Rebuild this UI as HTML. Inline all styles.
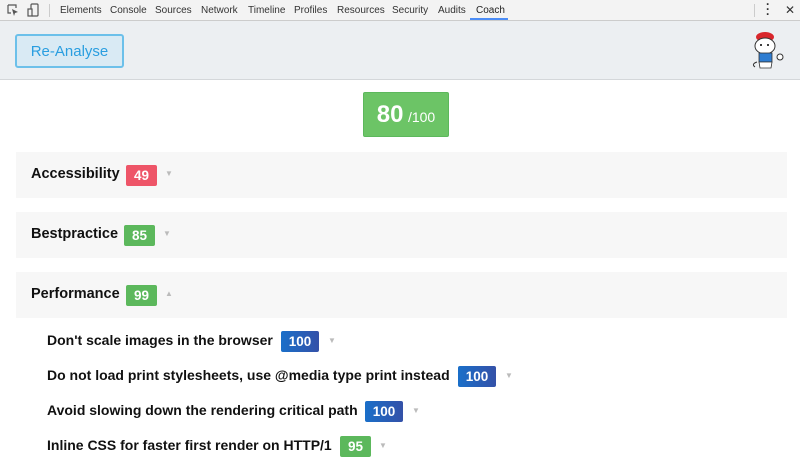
<!DOCTYPE html>
<html><head><style>
*{margin:0;padding:0;box-sizing:border-box}
body{width:800px;height:463px;overflow:hidden;background:#fff;font-family:"Liberation Sans",sans-serif;position:relative}
.tb{position:absolute;left:0;top:0;width:800px;height:21px;background:#f3f3f3;border-bottom:1px solid #ccc}
.tab{position:absolute;top:5px;font-size:10px;color:#333}
.hd{position:absolute;left:0;top:21px;width:800px;height:59px;background:#eceff2;border-bottom:1px solid #d4d7da}
.btn{position:absolute;left:15px;top:13px;width:109px;height:34px;border:2px solid #6cc0ea;border-radius:3px;background:#d9eaf4;color:#2a9ee0;font-size:15px;text-align:center;line-height:32px}
.score{position:absolute;left:363px;top:92px;width:86px;height:45px;background:#6cc466;border:1px solid #5cb85c;border-radius:2px;color:#fff;text-align:center;line-height:44px}
.sec{position:absolute;left:16px;width:771px;height:46px;background:#f7f7f7}
.sec b{position:absolute;left:15px;top:14px;font-size:14.5px;color:#111}
.bdg{position:absolute;height:21px;color:#fff;font-weight:bold;font-size:13.5px;text-align:center;line-height:21px;border-radius:2px}
.g{background:#5cb85c}.r{background:#ee5568}.bl{background:linear-gradient(90deg,#1a6fc9,#3451a8)}
.ar{position:absolute;font-size:8px;color:#bbb}
.it{position:absolute;left:47px;font-weight:bold;font-size:14px;color:#111}
</style></head><body>
<div class="tb">
<svg style="position:absolute;left:7px;top:4px" width="12" height="12" viewBox="0 0 12 12"><path d="M1 1h8v3M1 1v8h3" fill="none" stroke="#555" stroke-width="1.2"/><path d="M5 5l6 3-3 1-1 3z" fill="#555"/></svg>
<svg style="position:absolute;left:27px;top:3px" width="12" height="14" viewBox="0 0 12 14"><rect x="4" y="1" width="7" height="12" rx="1" fill="none" stroke="#555" stroke-width="1.2"/><rect x="1" y="6" width="4" height="7" fill="#f3f3f3" stroke="#555" stroke-width="1.2"/></svg>
<div style="position:absolute;left:49px;top:4px;width:1px;height:13px;background:#ccc"></div>
<span class="tab" style="left:60px">Elements</span>
<span class="tab" style="left:110px">Console</span>
<span class="tab" style="left:155px">Sources</span>
<span class="tab" style="left:201px">Network</span>
<span class="tab" style="left:248px">Timeline</span>
<span class="tab" style="left:294px">Profiles</span>
<span class="tab" style="left:337px">Resources</span>
<span class="tab" style="left:392px">Security</span>
<span class="tab" style="left:438px">Audits</span>
<span class="tab" style="left:476px;color:#222">Coach</span>
<div style="position:absolute;left:470px;top:18px;width:38px;height:2px;background:#4c8df6"></div>
<div style="position:absolute;left:754px;top:4px;width:1px;height:13px;background:#ccc"></div>
<span style="position:absolute;left:766px;top:2px;font-size:12px;font-weight:bold;color:#333;line-height:5px;width:3px">·<br>·<br>·</span>
<span style="position:absolute;left:785px;top:3px;font-size:12px;color:#333">✕</span>
</div>
<div class="hd">
<div class="btn">Re-Analyse</div>
<svg style="position:absolute;left:750px;top:9px" width="40" height="42" viewBox="0 0 40 42"><ellipse cx="15" cy="7" rx="9" ry="5" fill="#d9262c"/><ellipse cx="15" cy="16" rx="10" ry="8" fill="#fff" stroke="#333" stroke-width="1"/><circle cx="11" cy="15" r="1" fill="#000"/><circle cx="18" cy="15" r="1" fill="#000"/><rect x="9" y="23" width="13" height="9" fill="#2f7dd1" stroke="#333" stroke-width=".8"/><path d="M9 32h13l-1 6H10z" fill="#fff" stroke="#333" stroke-width=".8"/><path d="M5 37q-4-3 2-5" fill="none" stroke="#333"/><circle cx="30" cy="27" r="3" fill="#fff" stroke="#333"/></svg>
</div>
<div class="score"><span style="font-size:24px;font-weight:bold">80</span> <span style="font-size:14px">/100</span></div>
<div class="sec" style="top:152px"><b>Accessibility</b><div class="bdg r" style="left:110px;top:13px;width:31px">49</div><span class="ar" style="left:149px;top:17px">▼</span></div>
<div class="sec" style="top:212px"><b>Bestpractice</b><div class="bdg g" style="left:108px;top:13px;width:31px">85</div><span class="ar" style="left:147px;top:17px">▼</span></div>
<div class="sec" style="top:272px"><b>Performance</b><div class="bdg g" style="left:110px;top:13px;width:31px">99</div><span class="ar" style="left:149px;top:17px">▲</span></div>
<div class="it" style="top:332px">Don't scale images in the browser</div><div class="bdg bl" style="left:281px;top:331px;width:38px">100</div><span class="ar" style="left:328px;top:336px">▼</span>
<div class="it" style="top:367px">Do not load print stylesheets, use @media type print instead</div><div class="bdg bl" style="left:458px;top:366px;width:38px">100</div><span class="ar" style="left:505px;top:371px">▼</span>
<div class="it" style="top:402px">Avoid slowing down the rendering critical path</div><div class="bdg bl" style="left:365px;top:401px;width:38px">100</div><span class="ar" style="left:412px;top:406px">▼</span>
<div class="it" style="top:437px">Inline CSS for faster first render on HTTP/1</div><div class="bdg g" style="left:340px;top:436px;width:31px">95</div><span class="ar" style="left:379px;top:441px">▼</span>
</body></html>
